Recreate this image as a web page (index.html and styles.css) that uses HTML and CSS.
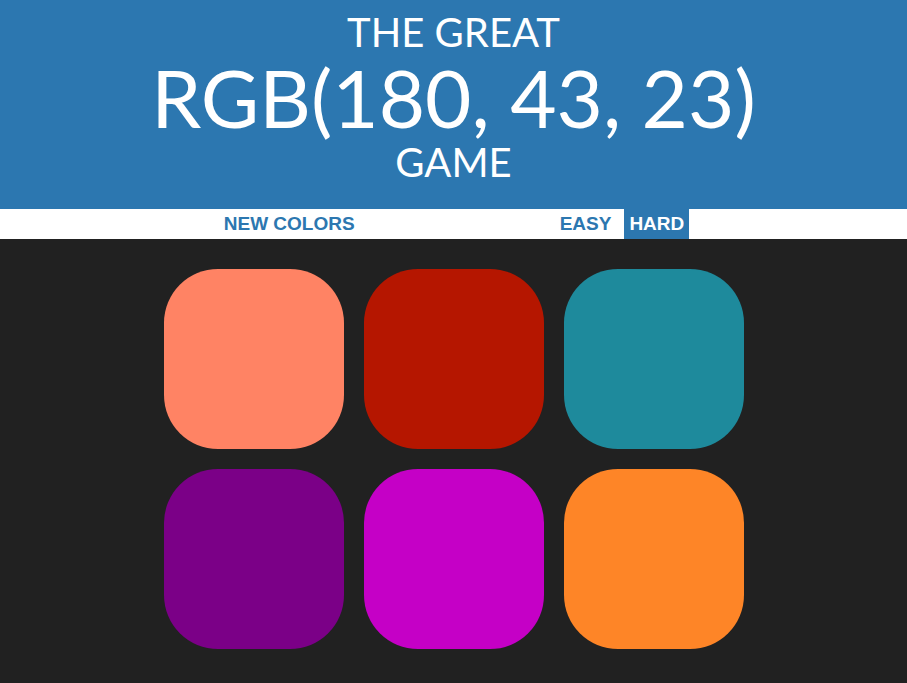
FILE: index.html
```html
<!DOCTYPE html>
<html lang="en">
<head>
<meta charset="utf-8">
<title>The Great RGB Game</title>
<link rel="stylesheet" href="styles.css">
</head>
<body>
<header class="header">
  <div class="title-line">The Great</div>
  <div class="title-color">RGB(180, 43, 23)</div>
  <div class="title-line">Game</div>
</header>
<nav class="stripe">
  <button class="btn">New Colors</button>
  <span class="message"></span>
  <button class="btn">Easy</button>
  <button class="btn btn-selected">Hard</button>
</nav>
<main class="board">
  <div class="square sq-salmon"></div>
  <div class="square sq-red"></div>
  <div class="square sq-teal"></div>
  <div class="square sq-purple"></div>
  <div class="square sq-magenta"></div>
  <div class="square sq-orange"></div>
</main>
</body>
</html>
```
FILE: styles.css
```css
html, body {
  margin: 0;
  padding: 0;
  background: #212121;
}

body {
  font-family: "Lato", "Open Sans", sans-serif;
}

.header {
  box-sizing: border-box;
  height: 209px;
  padding-top: 10px;
  background: #2c77b0;
  color: #fff;
  text-align: center;
  text-transform: uppercase;
}

.title-line {
  font-size: 40px;
  line-height: 44px;
  font-weight: 400;
}

.title-color {
  font-size: 80px;
  line-height: 86px;
  font-weight: 400;
}

.stripe {
  display: flex;
  justify-content: center;
  align-items: stretch;
  height: 30px;
  background: #fff;
}

.btn {
  border: none;
  background: none;
  margin: 0;
  padding: 0 6px;
  font-family: "Liberation Sans", Arial, sans-serif;
  font-weight: 700;
  font-size: 19px;
  letter-spacing: 0;
  text-transform: uppercase;
  color: #2c77b0;
  cursor: pointer;
}

.btn-selected {
  margin-left: 7px;
  padding: 0 5px;
  background: #2c77b0;
  color: #fff;
}

.message {
  width: 193px;
}

.board {
  display: grid;
  grid-template-columns: repeat(3, 180px);
  gap: 20px;
  width: 580px;
  margin: 30px auto 0;
}

.square {
  width: 180px;
  height: 180px;
  border-radius: 30%;
}

.sq-salmon { background: #ff8364; }
.sq-red { background: #b51600; }
.sq-teal { background: #1e8a9c; }
.sq-purple { background: #7b0087; }
.sq-magenta { background: #c500c6; }
.sq-orange { background: #fe8527; }
```
